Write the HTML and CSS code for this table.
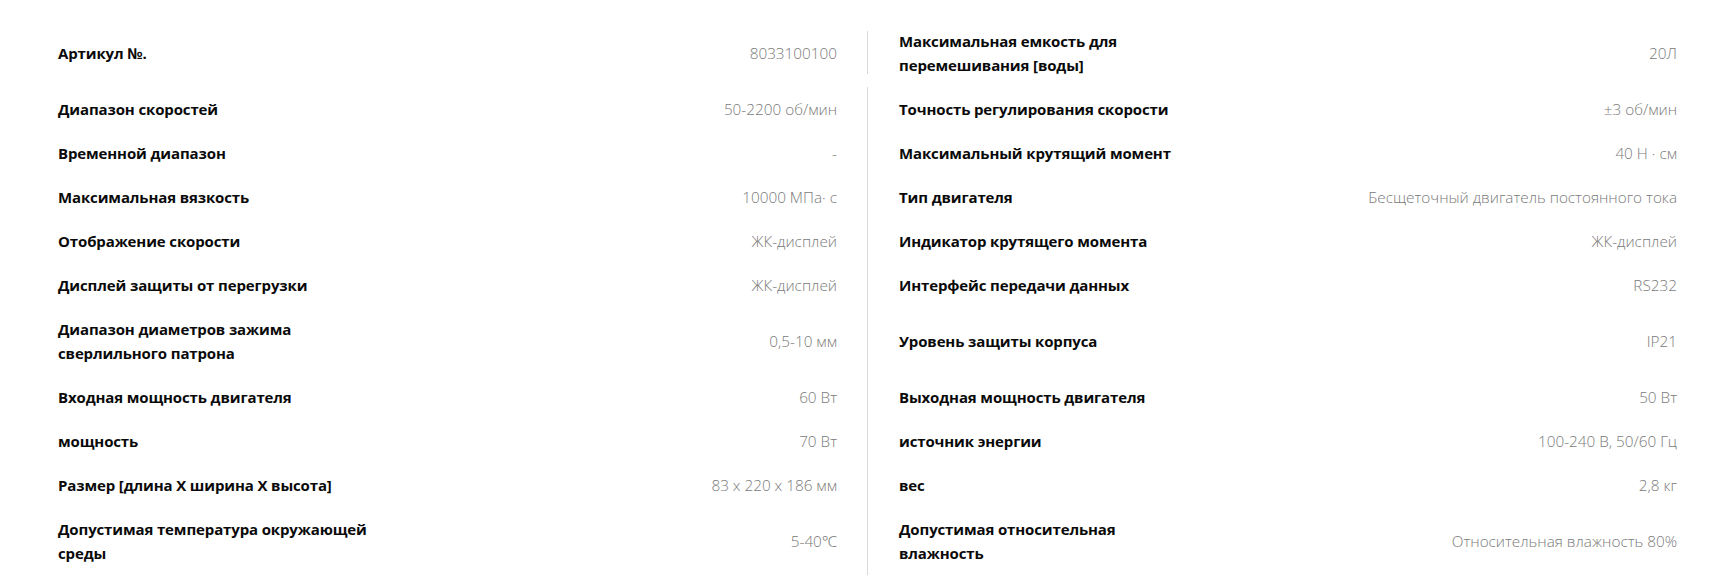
FILE: index.html
```html
<!DOCTYPE html>
<html lang="ru">
<head>
<meta charset="utf-8">
<title>Характеристики</title>
<link rel="stylesheet" href="styles.css">
</head>
<body>
<div class="specs">
  <div class="row first">
    <div class="label">Артикул №.</div>
    <div class="value">8033100100</div>
    <div class="divider"></div>
    <div class="label r">Максимальная емкость для перемешивания [воды]</div>
    <div class="value">20Л</div>
  </div>
  <div class="row">
    <div class="label">Диапазон скоростей</div>
    <div class="value">50-2200 об/мин</div>
    <div class="divider"></div>
    <div class="label r">Точность регулирования скорости</div>
    <div class="value">±3 об/мин</div>
  </div>
  <div class="row">
    <div class="label">Временной диапазон</div>
    <div class="value">-</div>
    <div class="divider"></div>
    <div class="label r">Максимальный крутящий момент</div>
    <div class="value">40 Н · см</div>
  </div>
  <div class="row">
    <div class="label">Максимальная вязкость</div>
    <div class="value">10000 МПа· с</div>
    <div class="divider"></div>
    <div class="label r">Тип двигателя</div>
    <div class="value">Бесщеточный двигатель постоянного тока</div>
  </div>
  <div class="row">
    <div class="label">Отображение скорости</div>
    <div class="value">ЖК-дисплей</div>
    <div class="divider"></div>
    <div class="label r">Индикатор крутящего момента</div>
    <div class="value">ЖК-дисплей</div>
  </div>
  <div class="row">
    <div class="label">Дисплей защиты от перегрузки</div>
    <div class="value">ЖК-дисплей</div>
    <div class="divider"></div>
    <div class="label r">Интерфейс передачи данных</div>
    <div class="value">RS232</div>
  </div>
  <div class="row">
    <div class="label">Диапазон диаметров зажима сверлильного патрона</div>
    <div class="value">0,5-10 мм</div>
    <div class="divider"></div>
    <div class="label r">Уровень защиты корпуса</div>
    <div class="value">IP21</div>
  </div>
  <div class="row">
    <div class="label">Входная мощность двигателя</div>
    <div class="value">60 Вт</div>
    <div class="divider"></div>
    <div class="label r">Выходная мощность двигателя</div>
    <div class="value">50 Вт</div>
  </div>
  <div class="row">
    <div class="label">мощность</div>
    <div class="value">70 Вт</div>
    <div class="divider"></div>
    <div class="label r">источник энергии</div>
    <div class="value">100-240 В, 50/60 Гц</div>
  </div>
  <div class="row">
    <div class="label">Размер [длина X ширина X высота]</div>
    <div class="value">83 x 220 x 186 мм</div>
    <div class="divider"></div>
    <div class="label r">вес</div>
    <div class="value">2,8 кг</div>
  </div>
  <div class="row">
    <div class="label">Допустимая температура окружающей среды</div>
    <div class="value">5-40℃</div>
    <div class="divider"></div>
    <div class="label r">Допустимая относительная влажность</div>
    <div class="value">Относительная влажность 80%</div>
  </div>
</div>
</body>
</html>
```

FILE: styles.css
```css
html, body {
  margin: 0;
  padding: 0;
  background: #ffffff;
}

body {
  font-family: "Open Sans", "Noto Sans", sans-serif;
  color: #000;
}

.specs {
  padding: 19px 56px 0 58px;
  display: flex;
  flex-direction: column;
}

.row {
  display: grid;
  grid-template-columns: 330px 479px 1px 316px 493px;
  align-items: center;
}

.label {
  font-size: 15px;
  font-weight: 700;
  letter-spacing: -0.13px;
  line-height: 24px;
  padding: 10px 0;
  color: #0a0a0a;
}

.label.r {
  padding-left: 31px;
  padding-right: 0;
  width: 285px;
}

.value {
  font-size: 15.3px;
  font-weight: 300;
  line-height: 24px;
  color: #7a7a7a;
  text-align: right;
  padding: 10px 0;
}

.row > .value:nth-child(2) {
  padding-right: 30px;
}

.divider {
  align-self: stretch;
  background: #d9d9d9;
  width: 1px;
}

.row.first .divider {
  margin: 12px 0 13px;
}
```
